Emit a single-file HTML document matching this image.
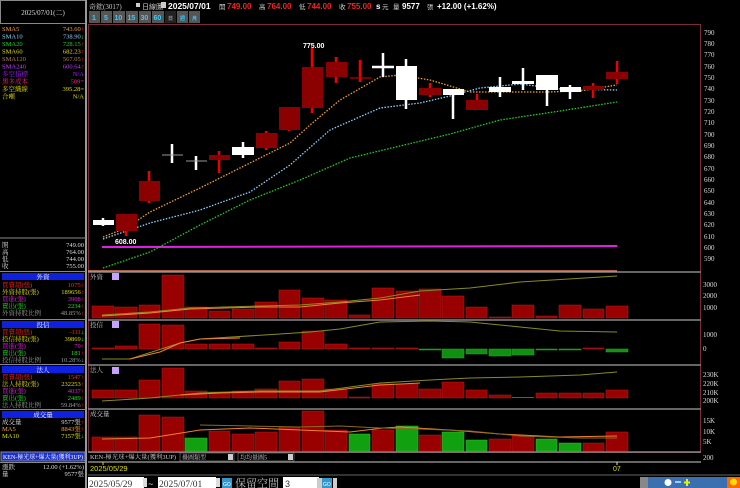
<!DOCTYPE html><html><head><meta charset="utf-8"><style>
html,body{margin:0;padding:0;background:#000;width:740px;height:488px;overflow:hidden}
svg{display:block;font-family:"Liberation Sans","Noto Sans CJK TC",sans-serif}
.s{font-family:"Liberation Serif","Noto Serif CJK SC",serif}
</style></head><body>
<svg width="740" height="488" viewBox="0 0 740 488" xmlns="http://www.w3.org/2000/svg">
<rect width="740" height="488" fill="#000"/>
<rect x="0.5" y="0.5" width="85" height="23" fill="#000" stroke="#888"/>
<text x="43" y="15" fill="#ddd" font-size="7" text-anchor="middle" class="s">2025/07/01(二)</text>
<line x1="86" y1="0" x2="86" y2="488" stroke="#999" stroke-width="2"/>
<g font-size="6.5" class="s">
<text x="2" y="31" fill="#f0a030">SMA5</text><text x="84" y="31" fill="#f0a030" text-anchor="end">743.60<tspan fill="#f22">↑</tspan></text>
<text x="2" y="38.5" fill="#8cd0ff">SMA10</text><text x="84" y="38.5" fill="#8cd0ff" text-anchor="end">738.90<tspan fill="#2f2">↓</tspan></text>
<text x="2" y="46" fill="#2c2">SMA20</text><text x="84" y="46" fill="#2c2" text-anchor="end">728.15<tspan fill="#f22">↑</tspan></text>
<text x="2" y="53.5" fill="#dd0">SMA60</text><text x="84" y="53.5" fill="#dd0" text-anchor="end">682.23<tspan fill="#f22">↑</tspan></text>
<text x="2" y="61" fill="#b08050">SMA120</text><text x="84" y="61" fill="#b08050" text-anchor="end">567.05<tspan fill="#f22">↑</tspan></text>
<text x="2" y="68.5" fill="#c040ff">SMA240</text><text x="84" y="68.5" fill="#c040ff" text-anchor="end">600.64<tspan fill="#f22">↑</tspan></text>
<text x="2" y="76" fill="#a020ff">多空指標</text><text x="84" y="76" fill="#a020ff" text-anchor="end">N/A</text>
<text x="2" y="83.5" fill="#ff2080">黑多成本</text><text x="84" y="83.5" fill="#ff2080" text-anchor="end">509=</text>
<text x="2" y="91" fill="#dd0">多空織線</text><text x="84" y="91" fill="#dd0" text-anchor="end">395.28=</text>
<text x="2" y="98.5" fill="#dd0">合噸</text><text x="84" y="98.5" fill="#dd0" text-anchor="end">N/A</text>
</g>
<line x1="0" y1="238" x2="86" y2="238" stroke="#888"/>
<g font-size="6.5" class="s" fill="#ddd">
<text x="2" y="247">開</text><text x="84" y="247" text-anchor="end">749.00</text>
<text x="2" y="254">高</text><text x="84" y="254" text-anchor="end">764.00</text>
<text x="2" y="261">低</text><text x="84" y="261" text-anchor="end">744.00</text>
<text x="2" y="268">收</text><text x="84" y="268" text-anchor="end">755.00</text>
</g>
<g font-size="6.5" class="s">
<line x1="0" y1="271.5" x2="86" y2="271.5" stroke="#888"/>
<rect x="2" y="273" width="82" height="7" fill="#1020e0"/><text x="43" y="279" fill="#fff" text-anchor="middle">外資</text>
<text x="2" y="287" fill="#f22">買賣超(張)</text><text x="84" y="287" fill="#f22" text-anchor="end">1075↑</text>
<text x="2" y="294" fill="#dd0">外資持股(張)</text><text x="84" y="294" fill="#dd0" text-anchor="end">189656<tspan fill="#f22">↑</tspan></text>
<text x="2" y="301" fill="#e020e0">買進(張)</text><text x="84" y="301" fill="#e020e0" text-anchor="end">3908<tspan fill="#f22">↑</tspan></text>
<text x="2" y="308" fill="#2d2">賣出(張)</text><text x="84" y="308" fill="#2d2" text-anchor="end">2234<tspan fill="#f22">↑</tspan></text>
<text x="2" y="315" fill="#999">外資持股比例</text><text x="84" y="315" fill="#999" text-anchor="end">48.85%<tspan fill="#f22">↑</tspan></text>
<line x1="0" y1="319.5" x2="86" y2="319.5" stroke="#888"/>
<rect x="2" y="321" width="82" height="7" fill="#1020e0"/><text x="43" y="327" fill="#fff" text-anchor="middle">投信</text>
<text x="2" y="334" fill="#f22">買賣超(張)</text><text x="84" y="334" fill="#f22" text-anchor="end">-111<tspan fill="#2f2">↓</tspan></text>
<text x="2" y="341" fill="#dd0">投信持股(張)</text><text x="84" y="341" fill="#dd0" text-anchor="end">39869<tspan fill="#2f2">↓</tspan></text>
<text x="2" y="348" fill="#e020e0">買進(張)</text><text x="84" y="348" fill="#e020e0" text-anchor="end">70<tspan fill="#f22">↑</tspan></text>
<text x="2" y="355" fill="#2d2">賣出(張)</text><text x="84" y="355" fill="#2d2" text-anchor="end">181<tspan fill="#f22">↑</tspan></text>
<text x="2" y="362" fill="#999">投信持股比例</text><text x="84" y="362" fill="#999" text-anchor="end">10.28%<tspan fill="#2f2">↓</tspan></text>
<line x1="0" y1="364.5" x2="86" y2="364.5" stroke="#888"/>
<rect x="2" y="366" width="82" height="7" fill="#1020e0"/><text x="43" y="372" fill="#fff" text-anchor="middle">法人</text>
<text x="2" y="379" fill="#f22">買賣超(張)</text><text x="84" y="379" fill="#f22" text-anchor="end">1547↑</text>
<text x="2" y="386" fill="#dd0">法人持股(張)</text><text x="84" y="386" fill="#dd0" text-anchor="end">232253<tspan fill="#f22">↑</tspan></text>
<text x="2" y="393" fill="#e020e0">買進(張)</text><text x="84" y="393" fill="#e020e0" text-anchor="end">4037<tspan fill="#f22">↑</tspan></text>
<text x="2" y="400" fill="#2d2">賣出(張)</text><text x="84" y="400" fill="#2d2" text-anchor="end">2489<tspan fill="#f22">↑</tspan></text>
<text x="2" y="407" fill="#999">法人持股比例</text><text x="84" y="407" fill="#999" text-anchor="end">59.84%<tspan fill="#f22">↑</tspan></text>
<line x1="0" y1="409.5" x2="86" y2="409.5" stroke="#888"/>
<rect x="2" y="411" width="82" height="7" fill="#1020e0"/><text x="43" y="417" fill="#fff" text-anchor="middle">成交量</text>
<text x="2" y="424" fill="#ddd">成交量</text><text x="84" y="424" fill="#ddd" text-anchor="end">9577張<tspan fill="#f22">↑</tspan></text>
<text x="2" y="431" fill="#f0a030">MA5</text><text x="84" y="431" fill="#f0a030" text-anchor="end">8843張<tspan fill="#f22">↑</tspan></text>
<text x="2" y="438" fill="#dd0">MA10</text><text x="84" y="438" fill="#dd0" text-anchor="end">7157張<tspan fill="#2f2">↓</tspan></text>
<rect x="1" y="452" width="84" height="9" fill="#1a30d0" stroke="#888"/>
<text x="3" y="459" fill="#fff" font-size="6" textLength="80" lengthAdjust="spacingAndGlyphs">KEN-極光球+爆大量(獲利3UP)</text>
<line x1="0" y1="462.5" x2="86" y2="462.5" stroke="#888"/>
<text x="2" y="469" fill="#ddd">漲跌</text><text x="84" y="469" fill="#ddd" text-anchor="end">12.00 (+1.62%)</text>
<text x="2" y="476" fill="#ddd">量</text><text x="84" y="476" fill="#ddd" text-anchor="end">9577張</text>
</g>
<g font-size="8">
<text x="89" y="9" fill="#ccc" class="s" font-size="7">奇鋐(3017)</text>
<rect x="136" y="3" width="4" height="4" fill="#ccc"/><text x="142" y="9" fill="#ccc" font-size="7">日線圖</text>
<rect x="161" y="2" width="5" height="6" fill="#ccc"/>
<text x="168" y="9" fill="#fff" font-weight="bold" font-size="8.5">2025/07/01</text>
<text x="219" y="9" fill="#ccc" font-size="6.5">開</text><text x="227" y="9" fill="#e22" font-weight="bold">749.00</text>
<text x="259" y="9" fill="#ccc" font-size="6.5">高</text><text x="267" y="9" fill="#e22" font-weight="bold">764.00</text>
<text x="299" y="9" fill="#ccc" font-size="6.5">低</text><text x="307" y="9" fill="#e22" font-weight="bold">744.00</text>
<text x="339" y="9" fill="#ccc" font-size="6.5">收</text><text x="347" y="9" fill="#e22" font-weight="bold">755.00</text>
<text x="376" y="9" fill="#fff" font-weight="bold">s</text><text x="382" y="9" fill="#ccc" font-size="6.5">元</text>
<text x="393" y="9" fill="#ccc" font-size="6.5">量</text><text x="402" y="9" fill="#fff" font-weight="bold">9577</text><text x="427" y="9" fill="#ccc" font-size="6.5">張</text>
<text x="437" y="9" fill="#fff" font-weight="bold">+12.00 (+1.62%)</text>
</g>
<g font-size="7" font-weight="bold">
<rect x="89" y="11" width="11" height="12" fill="#555"/><text x="92" y="20" fill="#3cf">1</text>
<rect x="101" y="11" width="11" height="12" fill="#555"/><text x="104" y="20" fill="#3cf">5</text>
<rect x="113" y="11" width="12" height="12" fill="#555"/><text x="114.5" y="20" fill="#3cf">10</text>
<rect x="126" y="11" width="12" height="12" fill="#555"/><text x="127.5" y="20" fill="#3cf">15</text>
<rect x="139" y="11" width="12" height="12" fill="#555"/><text x="140.5" y="20" fill="#3cf">30</text>
<rect x="152" y="11" width="12" height="12" fill="#555"/><text x="153.5" y="20" fill="#3cf">60</text>
<rect x="165" y="11" width="11" height="12" fill="#222"/><text x="168" y="20" fill="#999" font-size="5">日</text>
<rect x="177" y="11" width="11" height="12" fill="#555"/><text x="180" y="20" fill="#3cf" font-size="5">週</text>
<rect x="189" y="11" width="11" height="12" fill="#555"/><text x="192" y="20" fill="#3cf" font-size="5">月</text>
</g>
<rect x="88.5" y="24.5" width="612" height="428" fill="none" stroke="#7a2a3a"/>
<g stroke="#888" stroke-width="1.5">
<line x1="88" y1="272" x2="701" y2="272"/><line x1="88" y1="320" x2="701" y2="320"/>
<line x1="88" y1="365" x2="701" y2="365"/><line x1="88" y1="409" x2="701" y2="409"/>
<line x1="88" y1="452" x2="701" y2="452"/><line x1="88" y1="462" x2="701" y2="462"/>
</g>
<line x1="88" y1="271" x2="617" y2="271" stroke="#e08060" stroke-width="1.5"/>
<g font-size="7" fill="#ddd" class="s">
<text x="704" y="35">790</text><text x="704" y="46">780</text><text x="704" y="57">770</text><text x="704" y="69">760</text><text x="704" y="80">750</text><text x="704" y="91">740</text><text x="704" y="103">730</text><text x="704" y="114">720</text><text x="704" y="125">710</text><text x="704" y="137">700</text><text x="704" y="148">690</text><text x="704" y="159">680</text><text x="704" y="171">670</text><text x="704" y="182">660</text><text x="704" y="193">650</text><text x="704" y="205">640</text><text x="704" y="216">630</text><text x="704" y="227">620</text><text x="704" y="239">610</text><text x="704" y="250">600</text><text x="704" y="261">590</text>
<text x="703" y="287">3000</text><text x="703" y="298">2000</text><text x="703" y="310">1000</text>
<text x="703" y="337">1000</text><text x="703" y="351">0</text>
<text x="703" y="377">230K</text><text x="703" y="386">220K</text><text x="703" y="395">210K</text><text x="703" y="403">200K</text>
<text x="703" y="423">15K</text><text x="703" y="434">10K</text><text x="703" y="444">5K</text>
<text x="703" y="460">200</text>
</g>
<line x1="102" y1="247" x2="617" y2="246" stroke="#e020e0" stroke-width="2"/>
<polyline fill="none" stroke="#2c2" stroke-width="1.3" stroke-dasharray="1.5,1.5" points="103,268 150,252 200,225 250,200 300,180 350,158 400,146 450,134 500,120 560,111 617,102"/>
<polyline fill="none" stroke="#8cd0ff" stroke-width="1.3" stroke-dasharray="1.5,1.5" points="103,239 150,223 200,210 250,192 290,165 330,130 380,108 420,103 450,96 480,88 520,84 560,89 617,90"/>
<polyline fill="none" stroke="#f0a030" stroke-width="1.3" stroke-dasharray="1.5,1.5" points="103,237 126,228 150,212 200,188 240,168 290,143 310,125 340,100 380,77 400,75 430,80 470,92 500,92 547,92 580,91 617,85"/>
<g stroke-width="2.5">
<line x1="103" y1="218" x2="103" y2="226" stroke="#fff"/><rect x="93" y="220" width="21" height="5" fill="#fff"/>
<line x1="126" y1="214" x2="126" y2="236" stroke="#e00"/><rect x="116" y="214" width="21" height="17" fill="#8b0000"/>
<line x1="149" y1="171" x2="149" y2="203" stroke="#e00"/><rect x="139" y="181" width="21" height="20" fill="#8b0000"/>
<line x1="172" y1="144" x2="172" y2="163" stroke="#fff"/><line x1="162" y1="155" x2="183" y2="155" stroke="#999" stroke-width="1"/>
<line x1="196" y1="156" x2="196" y2="170" stroke="#fff"/><line x1="186" y1="161" x2="207" y2="161" stroke="#999" stroke-width="1"/>
<line x1="219" y1="151" x2="219" y2="173" stroke="#e00"/><rect x="209" y="155" width="21" height="5" fill="#8b0000"/>
<line x1="243" y1="142" x2="243" y2="158" stroke="#fff"/><rect x="232" y="147" width="22" height="8" fill="#fff"/>
<line x1="266" y1="131" x2="266" y2="150" stroke="#e00"/><rect x="256" y="133" width="21" height="15" fill="#8b0000"/>
<line x1="289" y1="107" x2="289" y2="131" stroke="#e00"/><rect x="279" y="107" width="21" height="23" fill="#8b0000"/>
<line x1="312" y1="48" x2="312" y2="113" stroke="#e00"/><rect x="302" y="67" width="21" height="41" fill="#8b0000"/>
<line x1="336" y1="57" x2="336" y2="83" stroke="#e00"/><rect x="326" y="62" width="21" height="15" fill="#8b0000"/>
<line x1="360" y1="60" x2="360" y2="82" stroke="#e00"/><line x1="350" y1="78" x2="371" y2="78" stroke="#b00" stroke-width="1.2"/>
<line x1="383" y1="53" x2="383" y2="77" stroke="#fff"/><line x1="372" y1="67" x2="394" y2="67" stroke="#fff" stroke-width="2.5"/>
<line x1="406" y1="59" x2="406" y2="109" stroke="#fff"/><rect x="396" y="66" width="21" height="34" fill="#fff"/>
<line x1="430" y1="83" x2="430" y2="97" stroke="#e00"/><rect x="419" y="88" width="22" height="7" fill="#8b0000"/>
<line x1="453" y1="89" x2="453" y2="119" stroke="#fff"/><rect x="443" y="89" width="21" height="6" fill="#fff"/>
<line x1="477" y1="94" x2="477" y2="100" stroke="#e00"/><rect x="466" y="100" width="22" height="10" fill="#8b0000"/>
<line x1="500" y1="77" x2="500" y2="97" stroke="#fff"/><rect x="489" y="87" width="22" height="5" fill="#fff"/>
<line x1="523" y1="68" x2="523" y2="90" stroke="#fff"/><rect x="512" y="81" width="22" height="3" fill="#fff"/>
<line x1="547" y1="75" x2="547" y2="106" stroke="#fff"/><rect x="536" y="75" width="22" height="15" fill="#fff"/>
<line x1="570" y1="85" x2="570" y2="99" stroke="#fff"/><rect x="560" y="87" width="21" height="5" fill="#fff"/>
<line x1="593" y1="83" x2="593" y2="98" stroke="#e00"/><rect x="583" y="86" width="21" height="4" fill="#8b0000"/>
<line x1="617" y1="61" x2="617" y2="84" stroke="#e00"/><rect x="606" y="72" width="22" height="7" fill="#8b0000"/>
</g>
<text x="303" y="48" fill="#fff" font-size="7" font-weight="bold">775.00</text>
<text x="115" y="244" fill="#fff" font-size="7" font-weight="bold">608.00</text>
<g fill="#990000" stroke="#b02020" stroke-width="0.5">
<rect x="92" y="306" width="22" height="12"/><rect x="115" y="307" width="22" height="11"/><rect x="139" y="305" width="21" height="13"/><rect x="162" y="275" width="22" height="43"/><rect x="185" y="307" width="22" height="11"/><rect x="209" y="311" width="21" height="7"/><rect x="232" y="309" width="22" height="9"/><rect x="255" y="302" width="22" height="16"/><rect x="279" y="290" width="21" height="28"/><rect x="302" y="298" width="22" height="20"/><rect x="325" y="300" width="22" height="18"/><rect x="349" y="315" width="21" height="3"/><rect x="372" y="288" width="22" height="30"/><rect x="396" y="291" width="22" height="27"/><rect x="419" y="289" width="22" height="29"/><rect x="442" y="296" width="22" height="22"/><rect x="466" y="307" width="21" height="11"/><rect x="489" y="317" width="22" height="1"/><rect x="512" y="305" width="22" height="13"/><rect x="536" y="316" width="21" height="2"/><rect x="559" y="305" width="22" height="13"/><rect x="583" y="309" width="21" height="9"/><rect x="606" y="306" width="22" height="12"/>
</g>
<polyline fill="none" stroke="#8a8a20" stroke-width="1" points="102,315 150,312 190,308 260,306 300,305 340,302 380,298 420,291 470,288 520,282 617,276"/>
<polyline fill="none" stroke="#f08030" stroke-width="1" points="102,316 150,313 190,309 260,307 300,307 340,303 380,300 420,295"/>
<g fill="#990000" stroke="#b02020" stroke-width="0.5">
<rect x="92" y="348" width="22" height="1"/><rect x="115" y="346" width="22" height="3"/><rect x="139" y="324" width="21" height="25"/><rect x="162" y="325" width="22" height="24"/><rect x="185" y="344" width="22" height="5"/><rect x="209" y="344" width="21" height="5"/><rect x="232" y="344" width="22" height="5"/><rect x="255" y="348" width="22" height="1"/><rect x="279" y="342" width="21" height="7"/><rect x="302" y="331" width="22" height="18"/><rect x="325" y="344" width="22" height="5"/><rect x="349" y="348" width="21" height="1"/><rect x="372" y="348" width="22" height="1"/><rect x="396" y="348" width="22" height="1"/><rect x="583" y="348" width="21" height="1"/>
</g>
<g fill="#109010" stroke="#20b020" stroke-width="0.5">
<rect x="419" y="349" width="22" height="1"/><rect x="442" y="349" width="22" height="9"/><rect x="466" y="349" width="21" height="5"/><rect x="489" y="349" width="22" height="7"/><rect x="512" y="349" width="22" height="6"/><rect x="536" y="349" width="21" height="1"/><rect x="559" y="349" width="22" height="1"/><rect x="606" y="349" width="22" height="3"/>
</g>
<polyline fill="none" stroke="#8a8a20" stroke-width="1" points="102,359 130,359 180,343 200,339 280,334 310,332 340,329 380,322 430,321 470,322 520,327 560,331 617,332"/>
<polyline fill="none" stroke="#f08030" stroke-width="1" points="130,359 160,352 180,343 200,339 240,338"/>
<g fill="#990000" stroke="#b02020" stroke-width="0.5">
<rect x="92" y="390" width="22" height="8"/><rect x="115" y="390" width="22" height="8"/><rect x="139" y="380" width="21" height="18"/><rect x="162" y="368" width="22" height="30"/><rect x="185" y="391" width="22" height="7"/><rect x="209" y="392" width="21" height="6"/><rect x="232" y="391" width="22" height="7"/><rect x="255" y="389" width="22" height="9"/><rect x="279" y="381" width="21" height="17"/><rect x="302" y="379" width="22" height="19"/><rect x="325" y="389" width="22" height="9"/><rect x="349" y="397" width="21" height="1"/><rect x="372" y="384" width="22" height="14"/><rect x="396" y="384" width="22" height="14"/><rect x="419" y="389" width="22" height="9"/><rect x="442" y="382" width="22" height="16"/><rect x="466" y="390" width="21" height="8"/><rect x="489" y="395" width="22" height="3"/><rect x="536" y="393" width="21" height="5"/><rect x="583" y="393" width="21" height="5"/><rect x="606" y="390" width="22" height="8"/><rect x="559" y="393" width="22" height="5"/>
</g>
<g fill="#109010"><rect x="512" y="397" width="22" height="1"/></g>
<polyline fill="none" stroke="#8a8a20" stroke-width="1" points="102,401 150,398 200,393 260,391 320,391 380,383 430,380 470,378 520,377 580,375 617,372"/>
<polyline fill="none" stroke="#f08030" stroke-width="1" points="180,395 220,393 260,392 320,392 380,385 420,383"/>
<g fill="#990000" stroke="#b02020" stroke-width="0.5">
<rect x="92" y="437" width="22" height="14"/><rect x="115" y="437" width="22" height="14"/><rect x="139" y="415" width="21" height="36"/><rect x="162" y="417" width="22" height="34"/><rect x="209" y="431" width="21" height="20"/><rect x="232" y="434" width="22" height="17"/><rect x="255" y="432" width="22" height="19"/><rect x="279" y="427" width="21" height="24"/><rect x="302" y="411" width="22" height="40"/><rect x="325" y="430" width="22" height="21"/><rect x="372" y="430" width="22" height="21"/><rect x="419" y="435" width="22" height="16"/><rect x="489" y="439" width="22" height="12"/><rect x="512" y="436" width="22" height="15"/><rect x="583" y="443" width="21" height="8"/><rect x="606" y="432" width="22" height="19"/>
</g>
<g fill="#10a010" stroke="#30c030" stroke-width="0.5">
<rect x="185" y="438" width="22" height="13"/><rect x="349" y="434" width="21" height="17"/><rect x="396" y="426" width="22" height="25"/><rect x="442" y="432" width="22" height="19"/><rect x="466" y="440" width="21" height="11"/><rect x="536" y="439" width="21" height="12"/><rect x="559" y="443" width="22" height="8"/>
</g>
<polyline fill="none" stroke="#f08030" stroke-width="1" points="102,439 150,438 200,430 250,428 300,430 350,432 383,428 400,427 450,430 500,434 560,437 617,436"/>
<polyline fill="none" stroke="#8a6a20" stroke-width="1" points="200,425 250,426 300,427 340,426 380,428 420,429 470,431 520,436 580,438 617,438"/>
<g font-size="6.5" fill="#ccc" class="s">
<text x="90" y="279">外資</text><text x="90" y="327">投信</text><text x="90" y="372">法人</text><text x="90" y="416">成交量</text>
</g>
<g fill="#c8a0ff"><rect x="112" y="273" width="7" height="7"/><rect x="112" y="321" width="7" height="7"/><rect x="112" y="367" width="7" height="7"/></g>
<text x="90" y="459" fill="#ccc" font-size="6" class="s" textLength="86" lengthAdjust="spacingAndGlyphs">KEN-極光球+爆大量(獲利3UP)</text>
<rect x="180" y="453" width="54" height="8" fill="#000" stroke="#888" stroke-width="0.6"/><text x="182" y="459.5" fill="#ccc" font-size="6" class="s">疊圖類型</text><rect x="228" y="454" width="5" height="6" fill="#ccc"/>
<rect x="238" y="453" width="56" height="8" fill="#000" stroke="#888" stroke-width="0.6"/><text x="240" y="459.5" fill="#ccc" font-size="6" class="s">均均量圖5</text><rect x="288" y="454" width="5" height="6" fill="#ccc"/>
<text x="90" y="471" fill="#dd0" font-size="7.5">2025/05/29</text>
<line x1="103" y1="462" x2="103" y2="465" stroke="#dd0"/>
<line x1="617" y1="462" x2="617" y2="465" stroke="#ddd"/>
<text x="613" y="471" fill="#dd0" font-size="7">07</text>
<line x1="88" y1="475" x2="740" y2="475" stroke="#666"/>
<rect x="88" y="477" width="56" height="11" fill="#fff"/><text x="89" y="487" font-size="9.5" fill="#333" class="s">2025/05/29</text><rect x="143" y="478" width="4" height="9" fill="#ddd"/>
<text x="148" y="487" font-size="9" fill="#ddd">~</text>
<rect x="158" y="477" width="58" height="11" fill="#fff"/><text x="159" y="487" font-size="9.5" fill="#333" class="s">2025/07/01</text><rect x="216" y="478" width="4" height="9" fill="#ddd"/>
<rect x="222" y="478" width="10" height="10" fill="#39c"/><text x="223" y="486" font-size="5" fill="#fff">GO</text>
<text x="235" y="487" font-size="11" fill="#bbb" class="s">保留空間</text>
<rect x="283" y="477" width="36" height="11" fill="#fff"/><text x="285" y="487" font-size="9" fill="#333">3</text>
<rect x="317" y="478" width="5" height="10" fill="#ccc"/>
<rect x="322" y="478" width="10" height="10" fill="#39c"/><text x="323" y="486" font-size="5" fill="#fff">GO</text>
<rect x="333" y="478" width="4" height="10" fill="#ccc"/>
<rect x="640" y="477" width="100" height="11" fill="#3a70b0"/>
<rect x="640" y="477" width="8" height="11" fill="#888"/>
<g><circle cx="668" cy="482.5" r="3.5" fill="#fff"/><rect x="675" y="481" width="6" height="2" fill="#9cf"/><rect x="686" y="479" width="2" height="7" fill="#ee0"/><rect x="684" y="481.5" width="6" height="2" fill="#ee0"/><rect x="727" y="477" width="13" height="11" fill="#f60"/><circle cx="733.5" cy="482" r="3.5" fill="#fd0"/></g>
</svg>
</body></html>
